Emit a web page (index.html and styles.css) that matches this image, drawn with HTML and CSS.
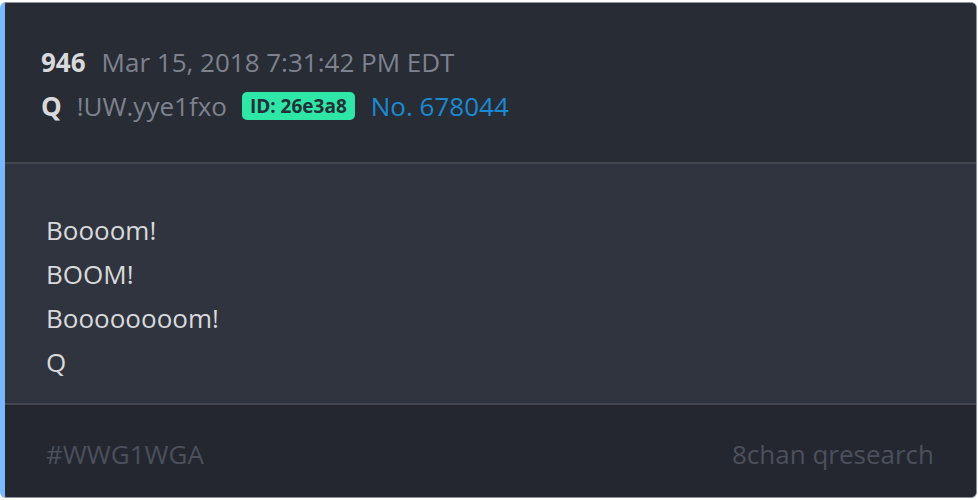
FILE: index.html
```html
<!DOCTYPE html>
<html lang="en">
<head>
  <meta charset="UTF-8" />
  <title>Q Drop 946</title>
  <link rel="stylesheet" href="styles.css">
</head>
<body>
  <article class="post">
    <header class="post-head">
      <div class="meta-line">
        <span class="num">946</span>
        <span class="date">Mar 15, 2018 7:31:42 PM EDT</span>
      </div>
      <div class="meta-line">
        <span class="name">Q</span>
        <span class="trip">!UW.yye1fxo</span>
        <span class="badge">ID: 26e3a8</span>
        <a class="post-no" href="#">No. 678044</a>
      </div>
    </header>

    <div class="post-body">
      <p>Boooom!</p>
      <p>BOOM!</p>
      <p>Boooooooom!</p>
      <p>Q</p>
    </div>

    <footer class="post-foot">
      <span class="tag">#WWG1WGA</span>
      <span class="source">8chan qresearch</span>
    </footer>
  </article>
</body>
</html>
```

FILE: styles.css
```css
body {
  margin: 0;
  padding: 0;
  background: #ffffff;
  font-family: 'Open Sans', 'Noto Sans', sans-serif;
  font-size: 26px;
}

.post {
  margin: 2px 1px 2px 0;
  height: 496px;
  box-sizing: border-box;
  display: flex;
  flex-direction: column;
  border: 1px solid #8c919a;
  border-left: 5px solid #79b8ff;
  border-radius: 6px;
  overflow: hidden;
  background: #2f343e;
}

.post-head {
  background: #282c35;
  padding: 37px 36px 34px;
  border-bottom: 2px solid #42464f;
}

.meta-line {
  display: flex;
  align-items: center;
  height: 44px;
}

.num,
.name {
  font-weight: 700;
  color: #d9d9db;
  margin-right: 16px;
}

.name {
  margin-right: 15px;
}

.date,
.trip {
  color: #7e828e;
}

.trip {
  margin-right: 15px;
}

.badge {
  background: #2ee6a6;
  color: #243038;
  font-weight: 700;
  font-size: 19px;
  line-height: 28px;
  padding: 0 8px;
  border-radius: 5px;
  margin-right: 16px;
}

.post-no {
  color: #1a8ad3;
  text-decoration: none;
}

.post-body {
  flex: 1;
  padding: 44px 41px 0;
  color: #d9d9db;
}

.post-body p {
  margin: 0;
  line-height: 44px;
}

.post-foot {
  display: flex;
  justify-content: space-between;
  background: #242730;
  border-top: 2px solid #42464f;
  padding: 27px 42px 21px 41px;
  line-height: 44px;
  color: #4b505c;
}
```
